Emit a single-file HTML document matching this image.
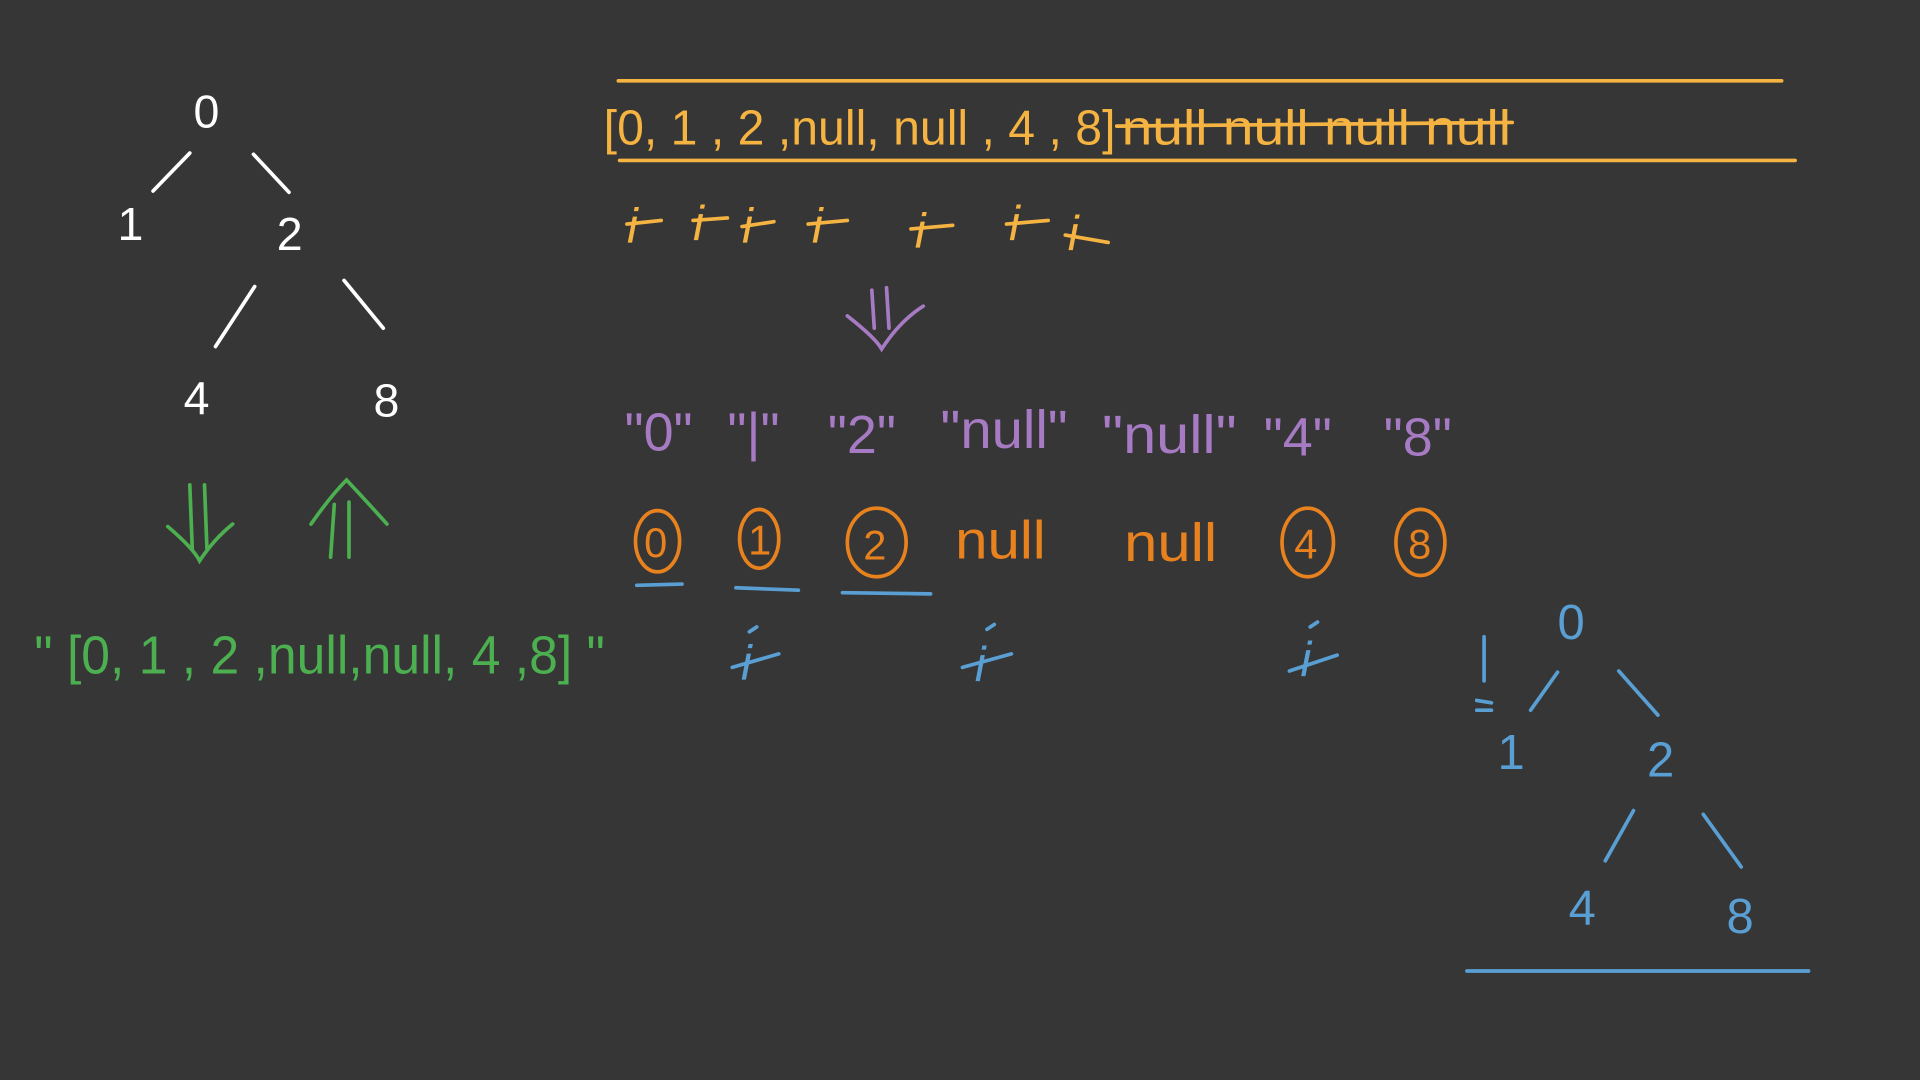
<!DOCTYPE html>
<html><head><meta charset="utf-8"><style>
html,body{margin:0;padding:0;background:#363636;overflow:hidden}
svg{display:block}
text{font-family:"Liberation Sans",sans-serif}
</style></head><body>
<svg width="1920" height="1080" viewBox="0 0 1568 882" xmlns="http://www.w3.org/2000/svg">
<rect width="1568" height="882" fill="#363636"/>
<g fill="none" stroke-linecap="round" stroke-width="3">
<g stroke="#fff">
<path d="M155 125 L125 156 M207 126 L236 157 M208 234 L176 283 M281 229 L313 268"/>
</g>
<g fill="#fff" stroke="none" font-size="38">
<text x="158" y="104">0</text><text x="96" y="196">1</text><text x="226" y="204">2</text>
<text x="150" y="338">4</text><text x="305" y="340">8</text>
</g>
<g stroke="#f5b342">
<path d="M505 66 L1455 66 M506 131 L1466 131"/>
<path d="M912 103 L1235 100"/>
</g>
<text x="493" y="118" font-size="40" fill="#f5b342" stroke="none" textLength="418" lengthAdjust="spacingAndGlyphs">[0, 1 , 2 ,null, null , 4 , 8]</text>
<text x="916" y="118" font-size="40" fill="#f5b342" stroke="none" textLength="318" lengthAdjust="spacingAndGlyphs">null null null null</text>
<g fill="#f5b342" stroke="none" font-size="40" font-style="italic">
<text x="512" y="198">i</text><text x="566" y="196">i</text><text x="606" y="198">i</text><text x="663" y="198">i</text>
<text x="747" y="202">i</text><text x="824" y="196">i</text><text x="872" y="204">i</text>
</g>
<g stroke="#f5b342" stroke-width="3">
<path d="M512 183 L540 180 M566 180 L594 178 M606 185 L632 181 M660 183 L692 180 M744 187 L778 184 M822 183 L856 180 M870 192 L905 198"/>
</g>
<g stroke="#a77bc4">
<path d="M712 237 L714 268 M724 235 L726 268 M692 258 Q715 276 720 285 Q735 262 754 250"/>
</g>
<g fill="#a77bc4" stroke="none" font-size="44">
<text x="510" y="368">"0"</text><text x="594" y="368">"|"</text><text x="676" y="370">"2"</text>
<text x="768" y="366" textLength="104" lengthAdjust="spacingAndGlyphs">"null"</text><text x="900" y="370" textLength="110" lengthAdjust="spacingAndGlyphs">"null"</text><text x="1032" y="372">"4"</text><text x="1130" y="372">"8"</text>
</g>
<g stroke="#e8821e">
<ellipse cx="537" cy="442" rx="18" ry="25"/><ellipse cx="620" cy="440" rx="16" ry="24"/>
<ellipse cx="716" cy="443" rx="24" ry="28"/><ellipse cx="1068" cy="443" rx="21" ry="28"/>
<ellipse cx="1160" cy="443" rx="20" ry="27"/>
</g>
<g fill="#e8821e" stroke="none" font-size="34">
<text x="526" y="455">0</text><text x="611" y="453">1</text><text x="705" y="457">2</text>
<text x="1057" y="456">4</text><text x="1150" y="456">8</text>
<text x="780" y="456" font-size="44" textLength="74" lengthAdjust="spacingAndGlyphs">null</text><text x="918" y="458" font-size="44" textLength="76" lengthAdjust="spacingAndGlyphs">null</text>
</g>
<g stroke="#4caf50">
<path d="M155 396 L157 448 M167 396 L169 448 M137 430 Q158 448 163 458 Q175 440 190 428"/>
<path d="M273 412 L270 455 M285 410 L285 455 M254 428 Q270 405 283 392 Q300 410 316 428"/>
</g>
<text x="28" y="550" font-size="44" fill="#4caf50" stroke="none" textLength="466" lengthAdjust="spacingAndGlyphs">" [0, 1 , 2 ,null,null, 4 ,8] "</text>
<g stroke="#5a9fd4">
<path d="M520 478 L557 477 M601 480 L652 482 M688 484 L760 485"/>
<path d="M598 545 L636 534 M786 545 L826 534 M1053 548 L1092 535 M612 516 L618 512 M806 514 L812 510 M1070 512 L1076 508"/>
<path d="M1272 549 L1250 580 M1322 548 L1354 584 M1334 662 L1311 703 M1391 665 L1422 708 M1198 793 L1477 793"/>
<path d="M1212 520 L1212 556 M1206 572 L1218 574 M1206 580 L1218 580"/>
</g>
<g fill="#5a9fd4" stroke="none" font-size="40">
<text x="1272" y="522">0</text><text x="1223" y="628">1</text><text x="1345" y="634">2</text>
<text x="1281" y="755">4</text><text x="1410" y="762">8</text>
<text x="605" y="555" font-style="italic">i</text><text x="796" y="556" font-style="italic">i</text><text x="1062" y="552" font-style="italic">i</text>
</g>
</g>
</svg>
</body></html>
